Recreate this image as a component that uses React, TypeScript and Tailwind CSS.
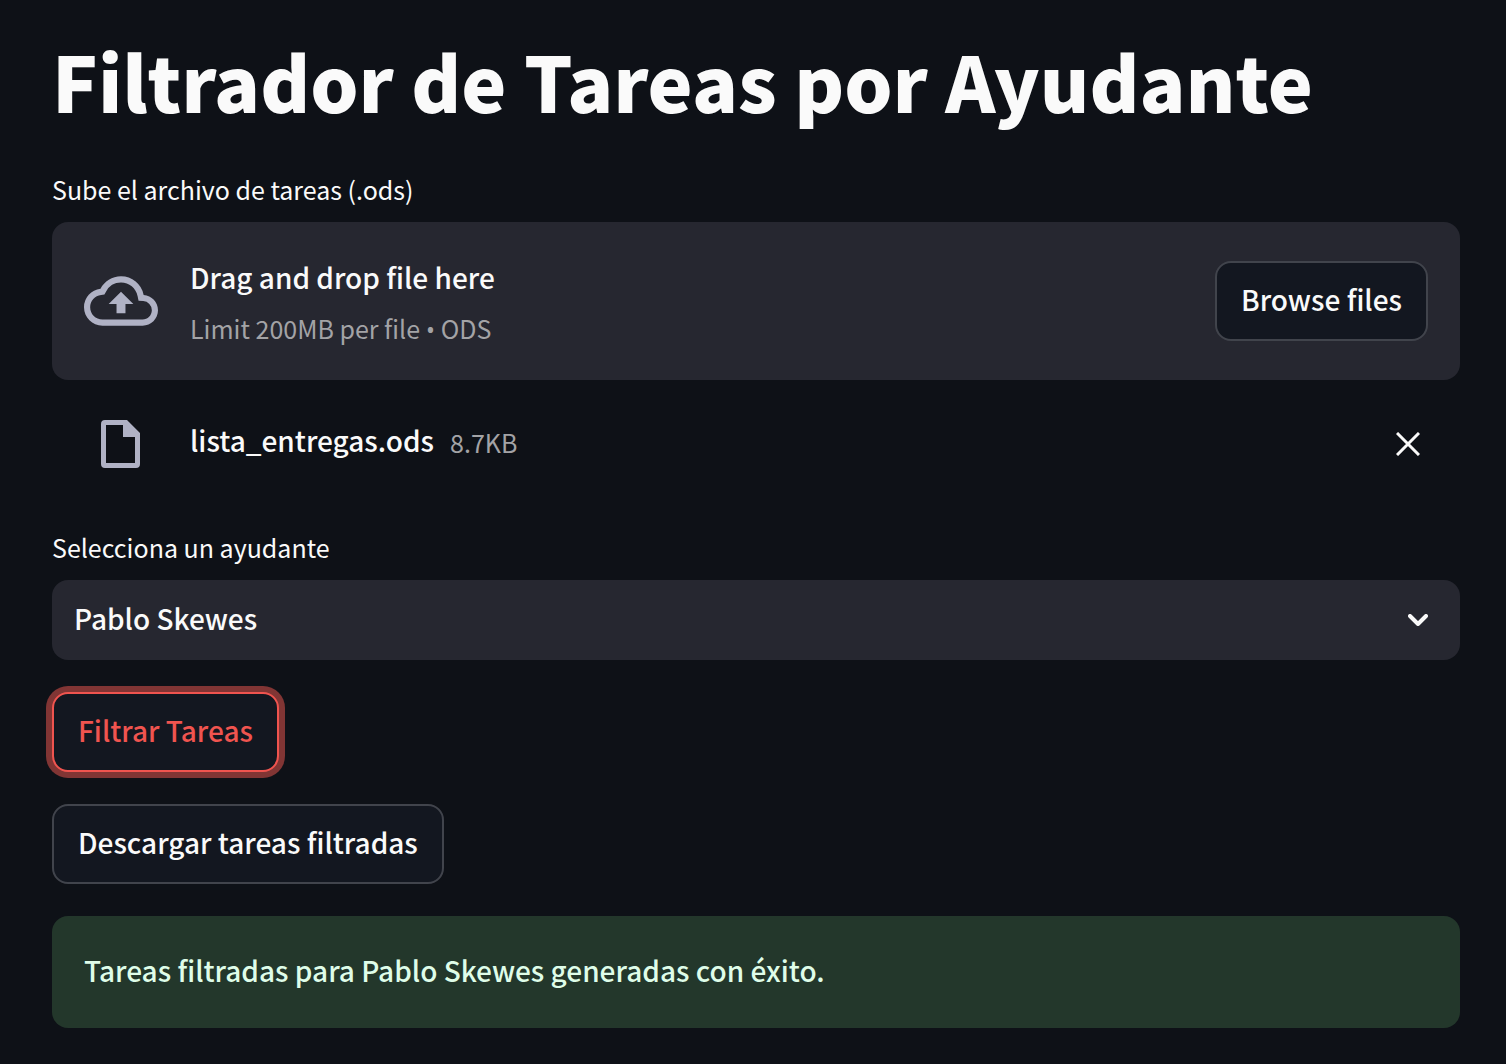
import { useState } from "react";

export default function App() {
  const [hasFile, setHasFile] = useState(true);
  return (
    <main className="min-h-screen bg-[#0e1117] pt-8 pr-[46px] pb-9 pl-[52px] font-['Noto_Sans_CJK_SC',sans-serif] text-[28px] leading-[48px] font-medium text-[#fafafa]">
      <h1 className="text-[76px] leading-[96px] font-black">Filtrador de Tareas por Ayudante</h1>
      <label htmlFor="upload" className="mt-10 block text-[25px] leading-[42px] font-normal">Sube el archivo de tareas (.ods)</label>
      <section className="mt-3 flex items-center rounded-2xl bg-[#262730] p-8">
        <input id="upload" type="file" accept=".ods" className="sr-only" tabIndex={-1} />
        <svg viewBox="0 0 24 24" className="mr-8 size-[74px] shrink-0 fill-[#b0b2c5]" aria-hidden="true">
          <path d="M19.35 10.04A7.49 7.49 0 0 0 12 4C9.11 4 6.6 5.64 5.35 8.04A5.994 5.994 0 0 0 0 14c0 3.31 2.69 6 6 6h13c2.76 0 5-2.24 5-5 0-2.64-2.05-4.78-4.65-4.96zM19 18H6c-2.21 0-4-1.79-4-4 0-2.05 1.53-3.76 3.56-3.97l1.07-.11.5-.95A5.469 5.469 0 0 1 12 6c2.62 0 4.88 1.86 5.39 4.43l.3 1.5 1.53.11A2.98 2.98 0 0 1 22 15c0 1.65-1.35 3-3 3zM8 13h2.55v3h2.9v-3H16l-4-4z" />
        </svg>
        <div className="flex-1">
          <div className="mb-2 leading-[46px]">Drag and drop file here</div>
          <div className="text-[25px] leading-10 font-normal text-[#a3a3a6]">
            Limit 200MB per file <span className="font-['Open_Sans',sans-serif] leading-none">•</span> ODS
          </div>
        </div>
        <button type="button" className="h-20 rounded-2xl border-2 border-[#41444c] bg-[#131720] px-6 pb-1">Browse files</button>
      </section>
      {hasFile && (
        <div className="mt-8 flex h-16 items-center pr-10 pl-8">
          <div className="mr-8 flex w-[74px] shrink-0 justify-center">
            <svg viewBox="0 0 40 48" className="h-12 w-10" aria-hidden="true">
              <path fillRule="evenodd" fill="#b0b2c5" d="M4 0h22l13 13v31a4 4 0 0 1-4 4H4a4 4 0 0 1-4-4V4a4 4 0 0 1 4-4zM5 5v38h29V17H22V5z" />
            </svg>
          </div>
          <span className="pb-2">lista_entregas.ods</span>
          <span className="ml-4 flex-1 pb-1 text-[25px] font-normal text-[#a3a3a6]">8.7KB</span>
          <button type="button" aria-label="Remove file" onClick={() => setHasFile(false)}>
            <svg viewBox="0 0 24 24" className="size-6" fill="none" stroke="#fafafa" strokeWidth="3" aria-hidden="true">
              <path d="M1 1l22 22M23 1L1 23" />
            </svg>
          </button>
        </div>
      )}
      <label htmlFor="helper" className="mt-[50px] block text-[25px] leading-[42px] font-normal">Selecciona un ayudante</label>
      <div className="relative mt-3">
        <select id="helper" className="block h-20 w-full appearance-none rounded-2xl bg-[#262730] px-[22px] pb-1">
          <option>Pablo Skewes</option>
        </select>
        <svg viewBox="0 0 20 12" className="pointer-events-none absolute top-[34px] right-8 h-3 w-5" fill="none" stroke="#fafafa" strokeWidth="4" strokeLinecap="round" strokeLinejoin="round" aria-hidden="true">
          <path d="M2 2l8 8 8-8" />
        </svg>
      </div>
      <button type="button" className="mt-8 block h-20 rounded-2xl border-2 border-[#f0544f] bg-[#131720] px-6 pb-1 text-[#f0544f] ring-6 ring-[#813534]">Filtrar Tareas</button>
      <button type="button" className="mt-8 block h-20 rounded-2xl border-2 border-[#41444c] bg-[#131720] px-6 pb-1">Descargar tareas filtradas</button>
      <div role="status" className="mt-8 rounded-2xl bg-[#23372b] px-8 pt-[30px] pb-[34px] text-[#dffde9]">Tareas filtradas para Pablo Skewes generadas con éxito.</div>
    </main>
  );
}
